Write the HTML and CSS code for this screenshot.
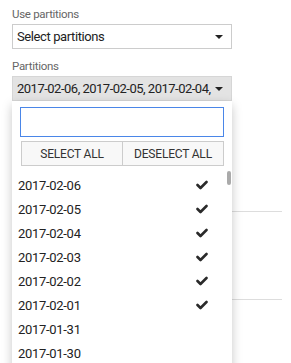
FILE: index.html
```html
<!DOCTYPE html>
<html lang="en">
<head>
    <meta charset="UTF-8">
    <title>Partitions</title>
    <link rel="stylesheet" href="styles.css">
</head>
<body>
    <div class="form">
        <div class="form-group">
            <label>Use partitions</label>
            <div class="select">
                <span class="value">Select partitions</span>
                <span class="caret"></span>
            </div>
        </div>

        <div class="form-group open">
            <label>Partitions</label>
            <div class="select active">
                <span class="value">2017-02-06, 2017-02-05, 2017-02-04,</span>
                <span class="caret"></span>
            </div>

            <div class="dropdown">
                <input type="text" class="search">
                <div class="actions">
                    <button>SELECT ALL</button>
                    <button>DESELECT ALL</button>
                </div>
                <ul class="options">
                    <li>2017-02-06 <svg class="check" viewBox="0 0 12 10"><path d="M1.5 5 L4.5 8 L10.5 2"/></svg></li>
                    <li>2017-02-05 <svg class="check" viewBox="0 0 12 10"><path d="M1.5 5 L4.5 8 L10.5 2"/></svg></li>
                    <li>2017-02-04 <svg class="check" viewBox="0 0 12 10"><path d="M1.5 5 L4.5 8 L10.5 2"/></svg></li>
                    <li>2017-02-03 <svg class="check" viewBox="0 0 12 10"><path d="M1.5 5 L4.5 8 L10.5 2"/></svg></li>
                    <li>2017-02-02 <svg class="check" viewBox="0 0 12 10"><path d="M1.5 5 L4.5 8 L10.5 2"/></svg></li>
                    <li>2017-02-01 <svg class="check" viewBox="0 0 12 10"><path d="M1.5 5 L4.5 8 L10.5 2"/></svg></li>
                    <li>2017-01-31</li>
                    <li>2017-01-30</li>
                </ul>
                <div class="scrollbar"></div>
            </div>
        </div>

        <div class="section first"></div>
        <div class="section"></div>
    </div>
</body>
</html>
```

FILE: styles.css
```css
html, body {
    height: 100%;
    overflow: hidden;
}
body {
    margin: 0;
    font-family: Roboto, "Liberation Sans", sans-serif;
    background: white;
    color: #222;
}
.form {
    padding: 6px 9px 0 12px;
}
.form-group {
    margin-bottom: 9px;
}
.form-group.open {
    position: relative;
}
label {
    display: block;
    font-size: 11.5px;
    letter-spacing: -0.3px;
    color: #666;
    height: 18px;
    line-height: 16px;
}
.select {
    display: flex;
    align-items: center;
    height: 25px;
    width: 220px;
    box-sizing: border-box;
    border: 1px solid #ccc;
    padding: 0 8px 0 4px;
    font-size: 13px;
    letter-spacing: -0.4px;
    color: #222;
    background: white;
}
.select.active {
    background: #e3e3e3;
    border-color: #d6d6d6;
    letter-spacing: -0.5px;
}
.value {
    flex: 1;
    white-space: nowrap;
    overflow: hidden;
    margin-right: 3px;
}
.caret {
    flex: none;
    width: 0;
    height: 0;
    border-left: 4px solid transparent;
    border-right: 4px solid transparent;
    border-top: 4px solid #222;
}
.dropdown {
    position: absolute;
    top: 43px;
    left: 0;
    width: 220px;
    height: 270px;
    background: white;
    box-shadow: 0 4px 10px rgba(0,0,0,0.22);
    padding: 6px 8px 0 8px;
    box-sizing: border-box;
    overflow: hidden;
    z-index: 2;
}
.search {
    display: block;
    width: 204px;
    height: 30px;
    box-sizing: border-box;
    border: 1px solid #4a86e8;
    outline: none;
    margin: 0;
}
.actions {
    display: flex;
    margin: 4px 0 0 1px;
    width: 203px;
}
.actions button {
    flex: 1;
    height: 25px;
    background: #f8f8f8;
    border: 1px solid #ccc;
    font-family: inherit;
    font-size: 12px;
    letter-spacing: -0.2px;
    color: #333;
    padding: 0;
}
.actions button + button {
    border-left: none;
}
.options {
    list-style: none;
    margin: 7px 0 0 -2px;
    padding: 0;
}
.options li {
    display: flex;
    justify-content: space-between;
    align-items: center;
    height: 24px;
    font-size: 13px;
    letter-spacing: -0.3px;
    padding-right: 16px;
}
.check {
    width: 12px;
    height: 10px;
    fill: none;
    stroke: #2a2a2a;
    stroke-width: 2.6;
    stroke-linecap: round;
    stroke-linejoin: round;
}
.scrollbar {
    position: absolute;
    top: 70px;
    right: 1px;
    width: 4px;
    height: 14px;
    border-radius: 2px;
    background: #aaa;
}
.section {
    height: 87px;
    border-bottom: 1px solid #ddd;
}
.section.first {
    height: 101px;
}
```
